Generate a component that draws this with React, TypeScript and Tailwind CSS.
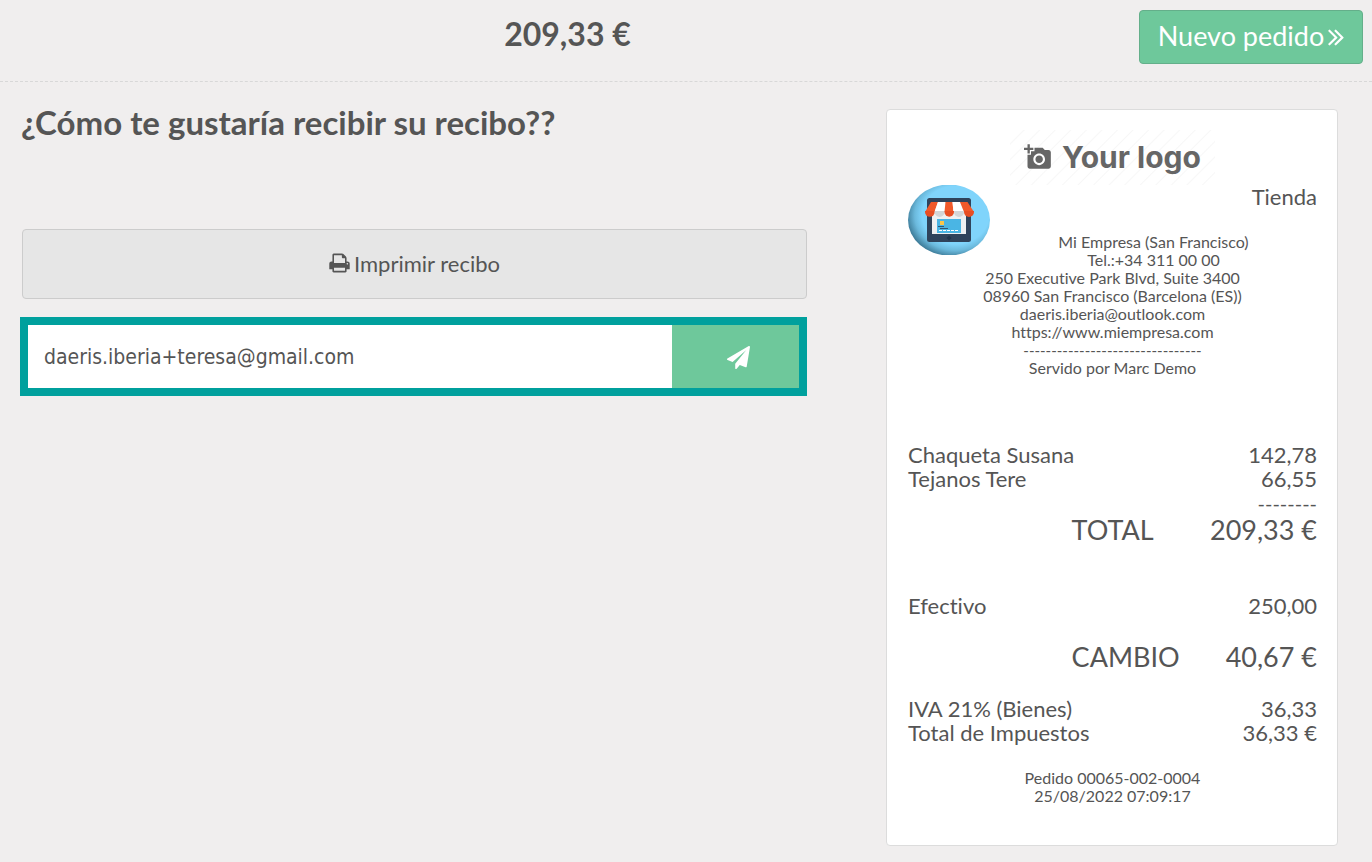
import { useState } from "react";
import { MdAddAPhoto } from "react-icons/md";

function PrintIcon() {
  return (
    <svg viewBox="0 0 1664 1792" className="h-[22px] w-[21px] shrink-0 fill-current" aria-hidden="true">
      <path d="M384 1536h896v-256h-896v256zM384 896h896v-384h-160q-40 0-68-28t-28-68v-160h-640v640zM1536 960q0-26-19-45t-45-19-45 19-19 45 19 45 45 19 45-19 19-45zM1664 960v416q0 13-9.5 22.5t-22.5 9.5h-224v160q0 40-28 68t-68 28h-960q-40 0-68-28t-28-68v-160h-224q-13 0-22.5-9.5t-9.5-22.5v-416q0-79 56.5-135.5t135.5-56.5h64v-544q0-40 28-68t68-28h672q40 0 88 20t76 48l152 152q28 28 48 76t20 88v256h64q79 0 135.5 56.5t56.5 135.5z" />
    </svg>
  );
}

function PlaneIcon() {
  return (
    <svg viewBox="0 0 1792 1792" className="size-[23px] fill-current" aria-hidden="true">
      <path d="M1764 11q33 24 27 64l-256 1536q-5 29-32 45-14 8-31 8-11 0-24-5l-453-185-242 295q-18 23-49 23-13 0-22-4-19-7-30.5-23.5t-11.5-36.5v-349l864-1059-1069 925-395-162q-37-14-40-55-2-40 32-59l1664-960q15-9 32-9 20 0 36 11z" />
    </svg>
  );
}

function DoubleAngleIcon() {
  return (
    <svg viewBox="0 0 1000 1792" className="h-[29px] w-4 shrink-0 fill-current" aria-hidden="true">
      <path d="M595 960q0 13-10 23l-466 466q-10 10-23 10t-23-10l-50-50q-10-10-10-23t10-23l393-393-393-393q-10-10-10-23t10-23l50-50q10-10 23-10t23 10l466 466q10 10 10 23zM979 960q0 13-10 23l-466 466q-10 10-23 10t-23-10l-50-50q-10-10-10-23t10-23l393-393-393-393q-10-10-10-23t10-23l50-50q10-10 23-10t23 10l466 466q10 10 10 23z" />
    </svg>
  );
}

function StoreBadge() {
  return (
    <svg viewBox="0 0 82 70" className="float-left h-[70px] w-[82px]" role="img" aria-label="Tienda">
      <defs>
        <radialGradient id="disc" cx="0.58" cy="0.43" r="0.6">
          <stop offset="0.68" stopColor="#80d4fb" />
          <stop offset="0.83" stopColor="#6bb9dc" />
          <stop offset="1" stopColor="#3e7c99" />
        </radialGradient>
      </defs>
      <ellipse cx="41" cy="35" rx="41" ry="35.5" fill="url(#disc)" />
      <rect x="19" y="13" width="44" height="44" rx="2.5" fill="#2f435b" />
      <rect x="24" y="17" width="34" height="32" fill="#eef0f1" />
      <path d="M23 17h7l-3.500 10h-9.500z" fill="#f1592a" />
      <path d="M30 17h7.500l-1 10h-10z" fill="#fff" />
      <path d="M37.500 17h7l1 10h-9z" fill="#f1592a" />
      <path d="M44.500 17h7.500l4 10h-10.500z" fill="#fff" />
      <path d="M52 17h7.500l6.500 10h-10z" fill="#f1592a" />
      <path d="M17 26h9.700v1a4.850 4.850 0 0 1-9.700 0z" fill="#e84e23" />
      <path d="M26.700 26h9.800v1a4.900 4.900 0 0 1-9.800 0z" fill="#d3d5d7" />
      <path d="M36.500 26h9.500v1a4.750 4.750 0 0 1-9.500 0z" fill="#e84e23" />
      <path d="M46 26h10v1a5 5 0 0 1-10 0z" fill="#d3d5d7" />
      <path d="M56 26h10v1a5 5 0 0 1-10 0z" fill="#e84e23" />
      <rect x="29" y="34" width="24" height="14" fill="#4ab5e4" />
      <rect x="32" y="36" width="4" height="4" fill="#f9c64a" />
      <path d="M30 41.500h6M32 43.500h8" stroke="#2f5675" />
      <path d="M31 45.500h20" stroke="#fff" strokeDasharray="3 1" />
      <path d="M41 50.500l2.500 2.500-2.500 2.500-2.500-2.500z" fill="#20344a" />
    </svg>
  );
}

type Line = { label: string; amount: string };

const products: Line[] = [
  { label: "Chaqueta Susana", amount: "142,78" },
  { label: "Tejanos Tere", amount: "66,55" },
];
const payments: Line[] = [{ label: "Efectivo", amount: "250,00" }];
const taxes: Line[] = [
  { label: "IVA 21% (Bienes)", amount: "36,33" },
  { label: "Total de Impuestos", amount: "36,33 €" },
];

function Lines({ rows }: { rows: Line[] }) {
  return (
    <table className="w-full">
      <tbody>
        {rows.map((row) => (
          <tr key={row.label}>
            <th scope="row" className="p-0 text-left font-normal">{row.label}</th>
            <td className="p-0 text-right">{row.amount}</td>
          </tr>
        ))}
      </tbody>
    </table>
  );
}

function Summary({ label, amount }: Line) {
  return (
    <div className="flex justify-between pl-[40%] text-[27px] leading-[30px]">
      <span>{label}</span>
      <span>{amount}</span>
    </div>
  );
}

function Receipt() {
  return (
    <article className="w-[452px] max-w-full rounded border border-[#dcdcdc] bg-white pt-5 pr-5 pb-10 pl-[21px] text-[22px] leading-6">
      <div className="mx-auto flex h-[55px] w-[205px] items-center justify-center gap-2.5 bg-[repeating-linear-gradient(135deg,#ffffff_0px,#ffffff_9px,#f7f7f7_10px,#ffffff_11px)] pb-0.5 text-[#666666]">
        <MdAddAPhoto className="size-7" aria-hidden="true" />
        <span className="font-[Inter,sans-serif] text-[30px] leading-9 font-bold">Your logo</span>
      </div>
      <StoreBadge />
      <p className="text-right">Tienda</p>
      <address className="pt-6 text-center text-base leading-[18px] not-italic">
        Mi Empresa (San Francisco)
        <br />
        Tel.:+34 311 00 00
        <br />
        250 Executive Park Blvd, Suite 3400
        <br />
        08960 San Francisco (Barcelona (ES))
        <br />
        daeris.iberia@outlook.com
        <br />
        https://www.miempresa.com
        <br />
        <span className="text-[15px]">--------------------------------</span>
        <br />
        Servido por Marc Demo
      </address>
      <div className="mt-[66px]">
        <Lines rows={products} />
        <p className="text-right text-xl leading-6">--------</p>
        <Summary label="TOTAL" amount="209,33 €" />
      </div>
      <div className="mt-[49px]">
        <Lines rows={payments} />
      </div>
      <div className="mt-6">
        <Summary label="CAMBIO" amount="40,67 €" />
      </div>
      <div className="mt-[25px]">
        <Lines rows={taxes} />
      </div>
      <p className="mt-6 text-center text-base leading-[18px]">
        Pedido 00065-002-0004
        <br />
        25/08/2022 07:09:17
      </p>
    </article>
  );
}

export default function App() {
  const [email, setEmail] = useState("daeris.iberia+teresa@gmail.com");
  return (
    <div className="min-h-screen bg-[#f0eeee] font-[Lato,sans-serif] text-[#555555] [font-variant-ligatures:none]">
      <header className="flex h-[82px] items-start border-b border-dashed border-[#d8d8d8] pt-2.5 pr-[9px]">
        <h1 className="flex-1 pr-1 text-center text-[32px] leading-[48px] font-bold">209,33 €</h1>
        <button
          type="button"
          className="flex h-[54px] w-56 items-center justify-center gap-1 rounded border border-[#64af8a] bg-[#6ec89b] pb-0.5 text-[27px] text-white"
        >
          Nuevo pedido
          <DoubleAngleIcon />
        </button>
      </header>
      <main className="grid grid-cols-[minmax(0,807fr)_minmax(0,565fr)]">
        <section className="pt-[19px] pl-5">
          <h2 className="pl-px text-[33px] leading-[42px] font-bold">¿Cómo te gustaría recibir su recibo??</h2>
          <button
            type="button"
            className="mt-[86px] ml-0.5 flex h-[70px] w-[calc(100%-2px)] items-center justify-center gap-1 rounded border border-[#cccccc] bg-[#e6e6e6] pb-0.5 text-[22px]"
          >
            <PrintIcon />
            Imprimir recibo
          </button>
          <form className="mt-[18px] flex h-[79px] border-8 border-[#00a09d]" onSubmit={(e) => e.preventDefault()}>
            <input
              type="email"
              aria-label="Correo electrónico"
              value={email}
              onChange={(e) => setEmail(e.target.value)}
              className="min-w-0 flex-1 bg-white px-4 pt-0.5 font-['DejaVu_Sans_Condensed','Noto_Sans',sans-serif] text-[21px] outline-none"
            />
            <button
              type="submit"
              aria-label="Enviar recibo"
              className="flex w-[127px] items-center justify-center bg-[#6ec89b] pt-0.5 pl-1.5 text-white"
            >
              <PlaneIcon />
            </button>
          </form>
        </section>
        <section className="flex justify-end pt-[27px] pr-[34px] pb-[15px]">
          <Receipt />
        </section>
      </main>
    </div>
  );
}
